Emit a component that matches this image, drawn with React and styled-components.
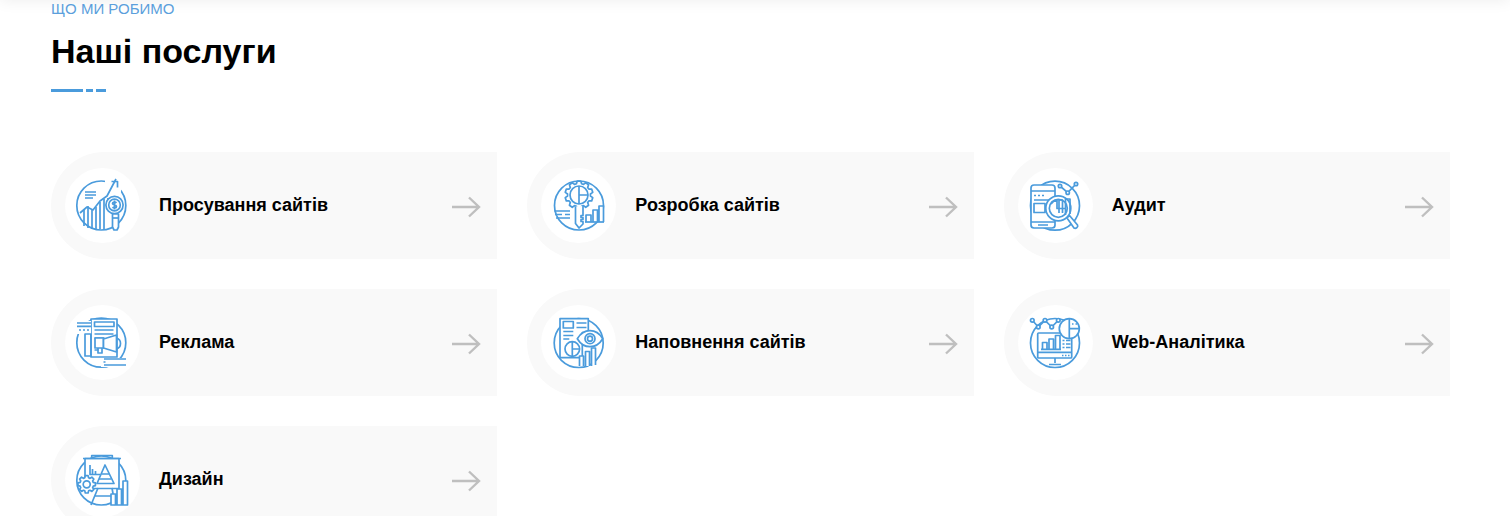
import React from 'react';
import styled, { createGlobalStyle } from 'styled-components';

const BLUE = '#4a9bdc';

const GlobalStyle = createGlobalStyle`
  html, body {
    margin: 0;
    padding: 0;
    height: 516px;
    overflow: hidden;
    background: #fff;
    font-family: "Liberation Sans", Arial, sans-serif;
  }
`;

// gear outline built from teeth around a center
const gearPath = (cx, cy, r1, r2, teeth) => {
  const pts = [];
  const step = (Math.PI * 2) / teeth;
  for (let i = 0; i < teeth; i++) {
    const a = i * step - Math.PI / 2;
    [[-0.36, r1], [-0.2, r2], [0.2, r2], [0.36, r1]].forEach(([k, r]) => {
      const t = a + k * step;
      pts.push(`${(cx + Math.cos(t) * r).toFixed(2)} ${(cy + Math.sin(t) * r).toFixed(2)}`);
    });
  }
  return `M${pts.join('L')}Z`;
};

const GrowthIcon = () => (
  <Glyph viewBox="0 0 75 75">
    <circle cx="36.3" cy="37.5" r="24.5" />
    <Mask d="M40 11h16v16h-16z" />
    <path d="M15 45l7-6 6 3 7-9 7-5 9-17" />
    <path d="M46.500 13.500h6v6" />
    <path d="M19 41v17M23 38v22M27 41v20M31 39v22M35 34v27M39 31v30M43 30v6" />
    <path d="M20 24h11M20 27h11M20 30h8" />
    <Solid as="circle" cx="49.500" cy="37" r="8.600" />
    <circle cx="49.500" cy="37" r="5.800" />
    <path d="M51.500 34.800c-1-1-4-1-4 .7s4 1 4 2.900-3 1.800-4 .8M49.500 32.500v9" />
    <Solid as="path" d="M47.500 46h6v13l-1.500 3h-3l-1.500-3z" />
    <path d="M47.500 50h6" />
  </Glyph>
);

const KeyIcon = () => (
  <Glyph viewBox="0 0 75 75">
    <circle cx="38" cy="37.500" r="24.500" />
    <Solid as="path" d={gearPath(38, 27, 11.500, 14, 10)} />
    <circle cx="38" cy="27" r="9" />
    <path d="M38 18v18M38 27h9" />
    <Solid as="path" d="M34.500 38.500v17l3.500 4.500 4-4v-2.500h-2v-2h2v-2h-2v-2h2v-9.500" />
    <path d="M13.500 43h15.500M14 46.500h7M24 46.500h5M15 50h14" />
    <Solid as="path" d="M45 54v-7h5v7M52 54v-12h4.500v12M58 54v-16h4.500v16" />
    <path d="M44 54h19" />
  </Glyph>
);

const AuditIcon = () => (
  <Glyph viewBox="0 0 75 75">
    <circle cx="37" cy="37.700" r="24.500" />
    <Solid as="rect" x="13" y="17" width="24" height="43" rx="3" />
    <path d="M13 23h24M13 54h24M20 57h10" />
    <path d="M16 27.500h2M20 27.500h2M24 27.500h2M16 32h18M16 35.500h11v9h-11z" />
    <path d="M42 18l7.700 6.700L58 16" />
    <Solid as="circle" cx="42" cy="18" r="1.700" />
    <Solid as="circle" cx="49.700" cy="24.700" r="1.700" />
    <Solid as="circle" cx="58" cy="16" r="1.700" />
    <Solid as="circle" cx="40.300" cy="40.300" r="12.500" />
    <circle cx="40.300" cy="40.300" r="9" />
    <path d="M41 45V32h3.500v13M47.500 47V31h4.500v15M33 36a9 9 0 0 1 6-4v8.500h8" />
    <Solid as="path" d="M49 50l2.500-2.500 8 9.500c1 2-1.500 4-3.500 3z" />
  </Glyph>
);

const MegaphoneIcon = () => (
  <Glyph viewBox="0 0 75 75">
    <circle cx="36.300" cy="37.700" r="24.500" />
    <Solid as="rect" x="26" y="14" width="26" height="38" />
    <path d="M29.500 17h19.500v4.500h-19.500zM29.500 25h19M29.500 29h19M29.500 33h10M29.500 45h4" />
    <Mask d="M11 16h15v13h-15z" />
    <path d="M12 18h14M12 21.300h14M14 25h2M18 25h2M22 25h2M20 29h6v22h-6z" />
    <Solid as="rect" x="30" y="33" width="8.500" height="10" />
    <path d="M33 43v5h4v-5" />
    <Solid as="path" d="M38.500 34l13-4v17l-13-4z" />
    <path d="M51.500 33c3 1 4 3 4 5.500s-1 4.500-4 5.500" />
    <Mask d="M36 53h26v9h-26z" />
    <path d="M39 54h22M39 60h22M38.500 57h2" />
  </Glyph>
);

const EyeIcon = () => (
  <Glyph viewBox="0 0 75 75">
    <circle cx="37.700" cy="38" r="24.500" />
    <Solid as="path" d="M19 13.700h28.300v14h-6v25h-22.300z" />
    <path d="M22.300 16.500h10v6.500h-10zM35.500 18h10M35.500 22.500h10M22.300 26.500h10M22.300 30.500h10M22.300 34h6" />
    <circle cx="31.300" cy="44" r="7.300" />
    <path d="M31.300 36.700v14.600M31.300 44h7.300" />
    <Solid as="path" d="M36.300 33.700c3-5 8-8 12.700-8s9.700 3 12.700 8c-3 5-8 8-12.700 8s-9.700-3-12.700-8z" />
    <circle cx="49" cy="33.700" r="5" />
    <circle cx="49" cy="33.700" r="2.500" />
    <Solid as="path" d="M38.500 61v-10h4v10M44.500 61V46.500h4V61M50.500 61V43h4v17" />
  </Glyph>
);

const AnalyticsIcon = () => (
  <Glyph viewBox="0 0 75 75">
    <circle cx="37" cy="38" r="24.500" />
    <path d="M14.300 15.300l6 6.700 6.700-6.700 6.700 6.700 6.600-6.700" />
    <Solid as="circle" cx="14.300" cy="15.300" r="1.800" />
    <Solid as="circle" cx="20.300" cy="22" r="1.800" />
    <Solid as="circle" cx="27" cy="15.300" r="1.800" />
    <Solid as="circle" cx="33.700" cy="22" r="1.800" />
    <Solid as="circle" cx="40.300" cy="15.300" r="1.800" />
    <Solid as="rect" x="19.700" y="28" width="34" height="25" rx="1" />
    <path d="M19.700 47.300h34M37 53v5M31 59.500h12" />
    <path d="M24.500 44v-6.500h4.500V44M31 44v-10h4.500v10M37.500 44v-13.500h4.500V44M23 44.300h20" />
    <path d="M44.500 35.500h2M48 35.500h4.500M44.500 39h2M48 39h4.500M44.500 42.500h2M48 42.500h4.500M44 50.500h1.500M47 50.500h1.500M50 50.500h1.500" />
    <Solid as="circle" cx="51.300" cy="23.700" r="10" />
    <path d="M51.300 13.700v20M51.300 23.700h10M54 19h1.500M57.500 19h1.500" />
  </Glyph>
);

const DesignIcon = () => (
  <Glyph viewBox="0 0 75 75">
    <circle cx="36.300" cy="38.500" r="24.500" />
    <Solid as="path" d="M20 16.500h34v30h-34z" />
    <path d="M26.700 16.500v-3h20.600v3M18 16.500h38" />
    <path d="M25 23v9.500h10M27.500 32v-5M30.500 32v-3" />
    <Solid as="path" d="M40 23l9 18.500h-17z" />
    <path d="M36.500 32h7.500M34 37h12M33 46l-7 17M47 46l3 17M30 54h21" />
    <Solid as="path" d={gearPath(21.700, 42.300, 6.800, 8.800, 8)} />
    <circle cx="21.700" cy="42.300" r="3.500" />
    <Solid as="path" d="M46 63v-11h4.500v11zM52 63v-16h4.500v16zM58 63v-24h4.500v24z" />
  </Glyph>
);

const services = [
  { title: 'Просування сайтів', icon: <GrowthIcon /> },
  { title: 'Розробка сайтів', icon: <KeyIcon /> },
  { title: 'Аудит', icon: <AuditIcon /> },
  { title: 'Реклама', icon: <MegaphoneIcon /> },
  { title: 'Наповнення сайтів', icon: <EyeIcon /> },
  { title: 'Web-Аналітика', icon: <AnalyticsIcon /> },
  { title: 'Дизайн', icon: <DesignIcon /> },
];

const App = () => (
  <>
    <GlobalStyle />
    <HeaderEdge />
    <Section>
      <Eyebrow>Що ми робимо</Eyebrow>
      <Title>Наші послуги</Title>
      <Divider>
        <Dash $w={32} />
        <Dash $w={7} />
        <Dash $w={10} />
      </Divider>
      <Grid>
        {services.map(s => (
          <Card key={s.title}>
            <IconCircle>{s.icon}</IconCircle>
            <CardTitle>{s.title}</CardTitle>
            <Arrow viewBox="0 0 30 22">
              <path d="M1 11h27M18 1.500L28 11l-10 9.500" />
            </Arrow>
          </Card>
        ))}
      </Grid>
    </Section>
  </>
);

// the site's header sits just above the crop, only its shadow shows
const HeaderEdge = styled.div`
  height: 20px;
  margin-top: -20px;
  box-shadow: 0 0 16px rgba(0, 0, 0, 0.08);
`;

const Section = styled.section`
  padding: 0 60px 0 51px;
`;

const Eyebrow = styled.div`
  font-size: 15px;
  line-height: 17px;
  text-transform: uppercase;
  color: #5b9fdc;
`;

const Title = styled.h2`
  margin: 14px 0 0;
  font-size: 34px;
  line-height: 41px;
  font-weight: 700;
  color: #000;
`;

const Divider = styled.div`
  display: flex;
  gap: 3px;
  margin-top: 17px;
`;

const Dash = styled.span`
  display: block;
  width: ${p => p.$w}px;
  height: 3px;
  background: ${BLUE};
`;

const Grid = styled.div`
  display: grid;
  grid-template-columns: repeat(3, 1fr);
  gap: 30px;
  margin-top: 60px;
`;

const Card = styled.div`
  display: flex;
  align-items: center;
  height: 107px;
  padding: 0 16px 0 14px;
  background: #f9f9f9;
  border-radius: 53.5px 0 0 53.5px;
`;

const IconCircle = styled.div`
  flex: none;
  width: 75px;
  height: 75px;
  border-radius: 50%;
  background: #fff;
`;

const Glyph = styled.svg`
  display: block;
  width: 75px;
  height: 75px;
  overflow: visible;
  fill: none;
  stroke: ${BLUE};
  stroke-width: 1.7;
  stroke-linejoin: round;
`;

const Solid = styled.path`
  fill: #fff;
`;

const Mask = styled.path`
  fill: #fff;
  stroke: none;
`;

const CardTitle = styled.div`
  flex: 1;
  margin: 0 0 2px 19px;
  font-size: 18px;
  font-weight: 700;
  line-height: 22px;
  color: #000;
`;

const Arrow = styled.svg`
  flex: none;
  width: 30px;
  height: 22px;
  margin-top: 3px;
  fill: none;
  stroke: #bfbfbf;
  stroke-width: 2.4;
`;

export default App;
